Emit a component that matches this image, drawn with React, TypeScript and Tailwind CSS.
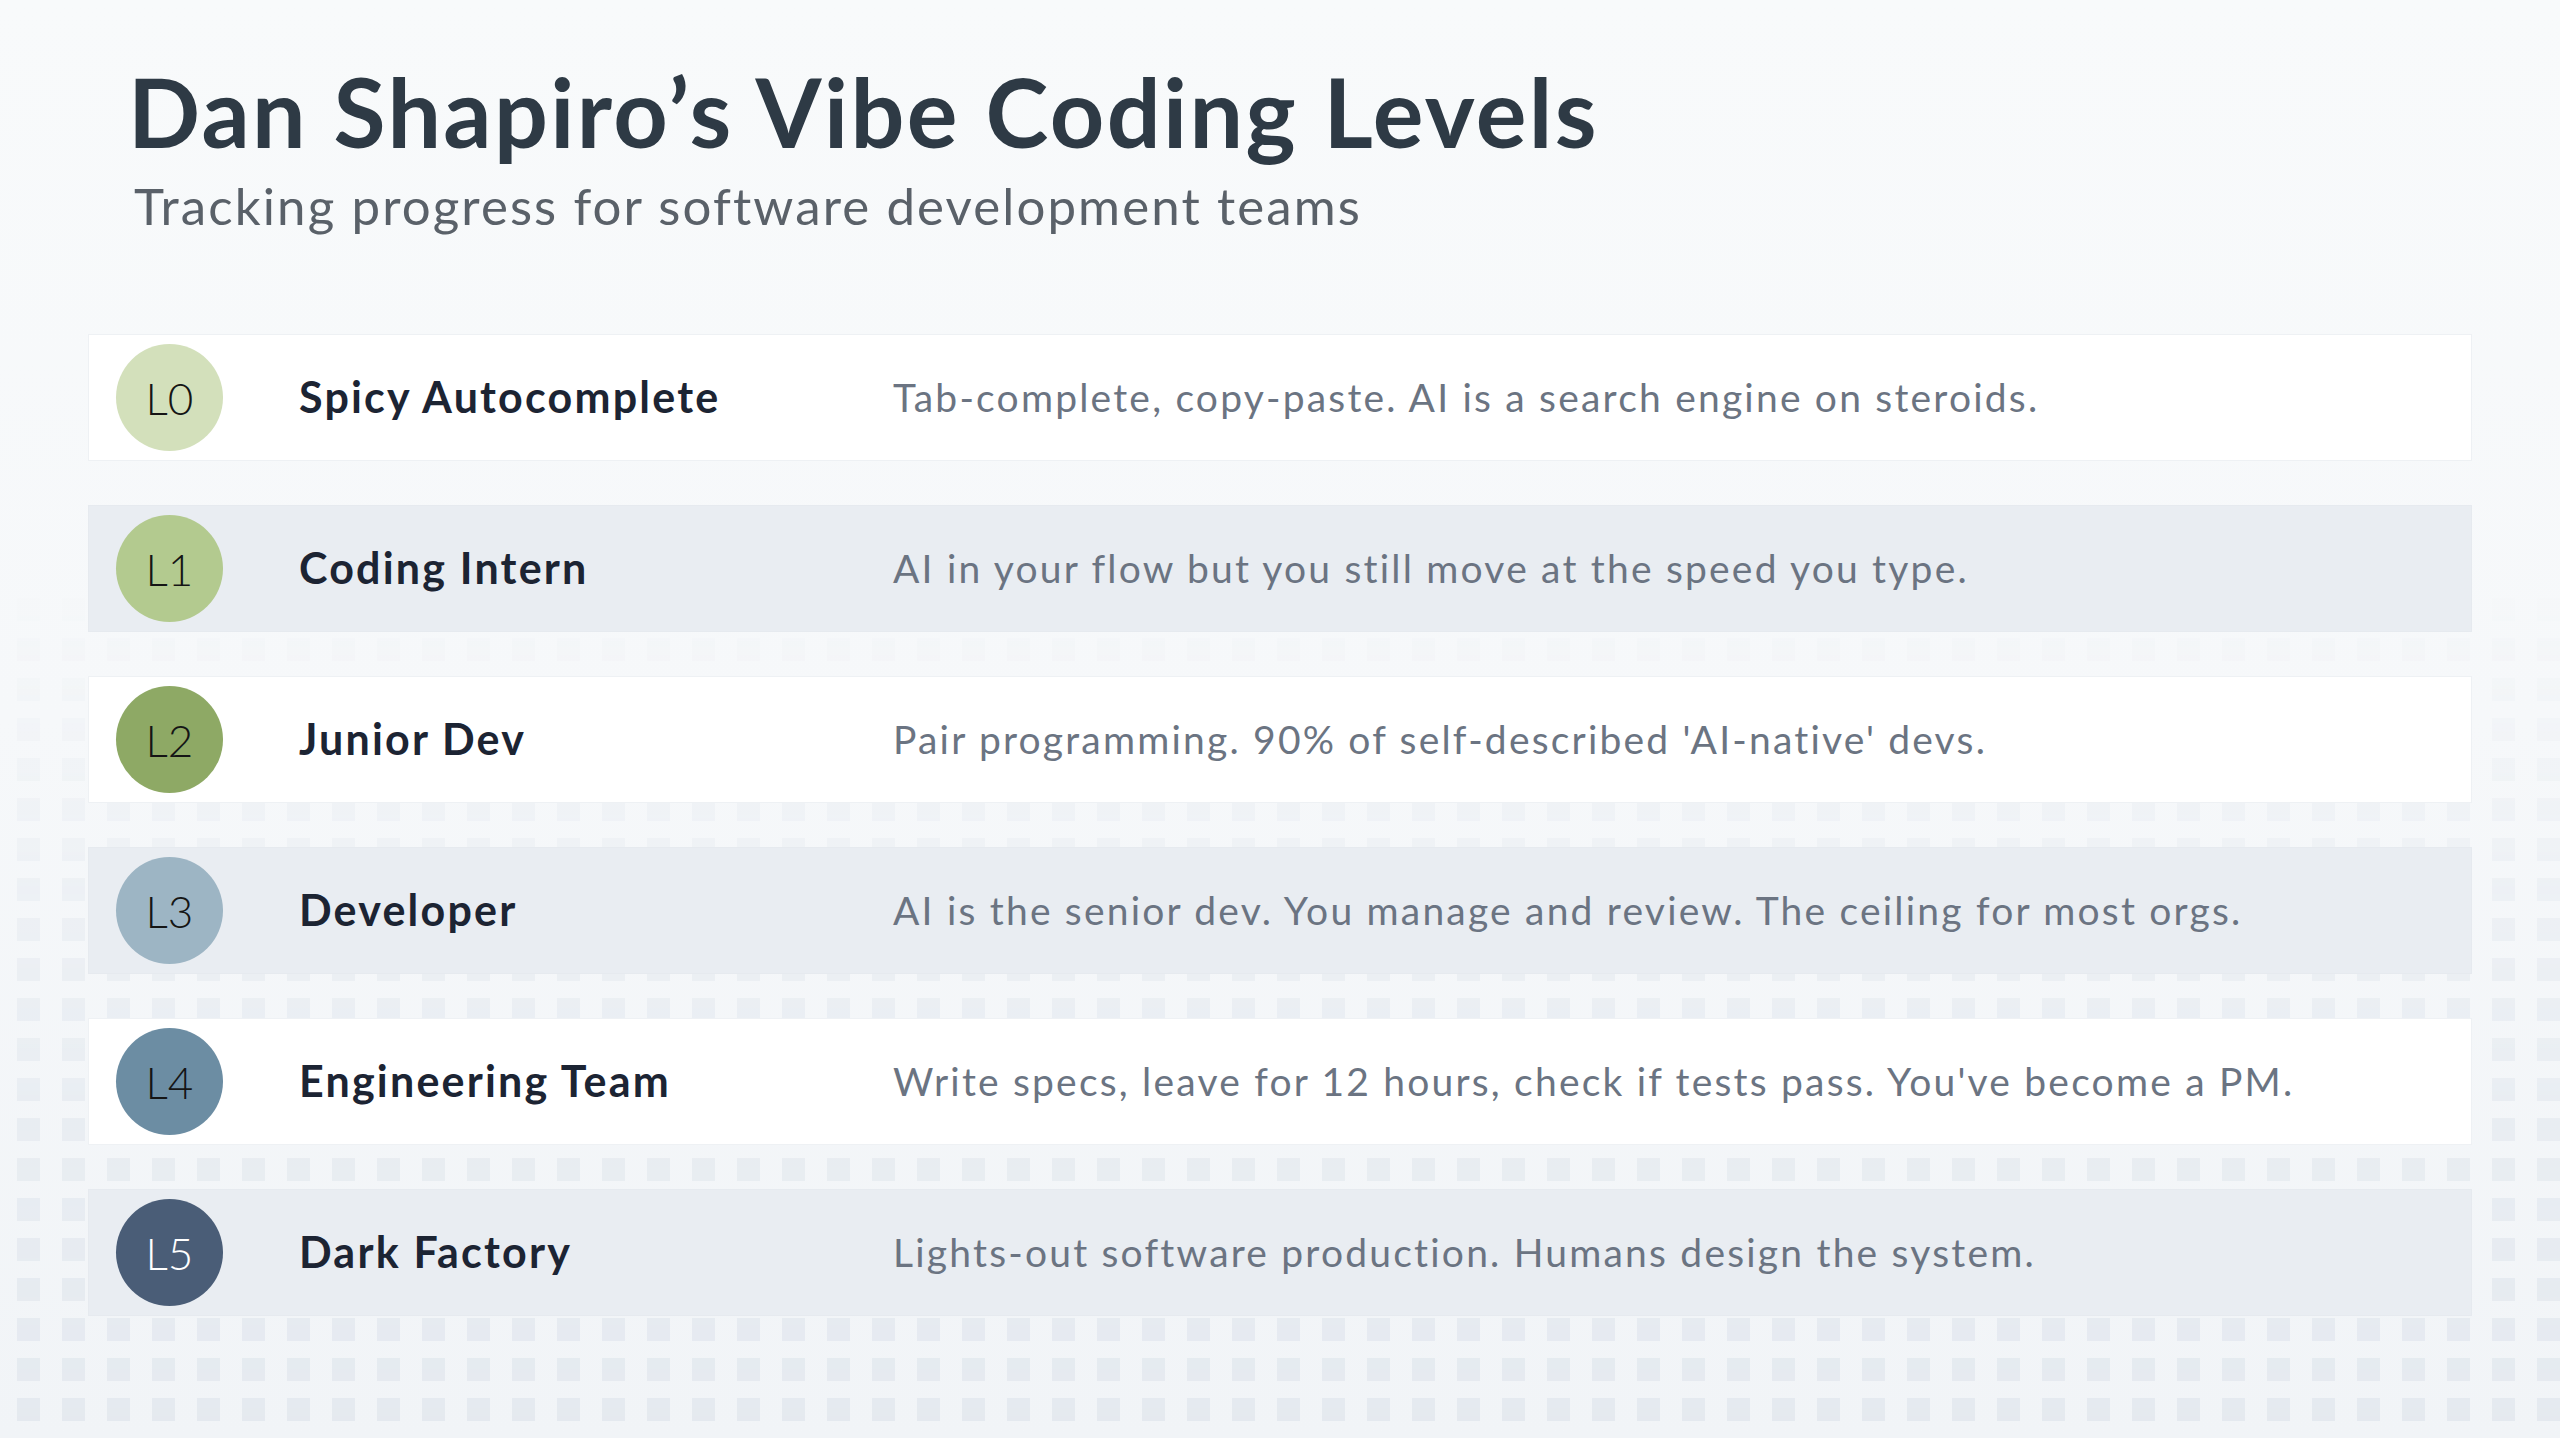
import React from "react";

const levels = [
  { l: "L0", c: "bg-[#d3e0bb]", t: "text-[#151515]", name: "Spicy Autocomplete", d: "Tab-complete, copy-paste. AI is a search engine on steroids.", alt: false },
  { l: "L1", c: "bg-[#b3ca8f]", t: "text-[#151515]", name: "Coding Intern", d: "AI in your flow but you still move at the speed you type.", alt: true },
  { l: "L2", c: "bg-[#8ea965]", t: "text-[#151515]", name: "Junior Dev", d: "Pair programming. 90% of self-described 'AI-native' devs.", alt: false },
  { l: "L3", c: "bg-[#9db5c4]", t: "text-[#151515]", name: "Developer", d: "AI is the senior dev. You manage and review. The ceiling for most orgs.", alt: true },
  { l: "L4", c: "bg-[#6c8da3]", t: "text-[#151515]", name: "Engineering Team", d: "Write specs, leave for 12 hours, check if tests pass. You've become a PM.", alt: false },
  { l: "L5", c: "bg-[#4a5d77]", t: "text-white", name: "Dark Factory", d: "Lights-out software production. Humans design the system.", alt: true },
];

export default function App() {
  return (
    <div
      className="relative w-[2560px] h-[1438px] overflow-hidden bg-[linear-gradient(180deg,#f8fafb_0%,#f6f8fa_50%,#f1f4f7_100%)]"
      style={{ fontFamily: "Lato, 'Open Sans', sans-serif" }}
    >
      <svg
        className="absolute inset-0 [mask-image:linear-gradient(180deg,transparent_40%,rgba(0,0,0,0.5)_65%,black_100%)]"
        width="2560"
        height="1438"
      >
        <defs>
          <pattern id="sq" x="17" y="38" width="45" height="40" patternUnits="userSpaceOnUse">
            <rect x="0" y="0" width="23" height="23" fill="#e4e9ef" />
          </pattern>
        </defs>
        <rect width="2560" height="1438" fill="url(#sq)" />
      </svg>

      <div className="relative flex flex-col">
        <div className="pl-[128px] pt-[56px]">
          <h1 className="text-[95px] leading-[110px] font-bold text-[#2e3a45] tracking-[2.4px]">
            Dan Shapiro’s Vibe Coding Levels
          </h1>
          <p className="pl-[6px] mt-[10px] text-[51px] leading-[60px] text-[#5a6169] tracking-[2.1px]">
            Tracking progress for software development teams
          </p>
        </div>

        <div className="mt-[98px] mx-[88px] flex flex-col gap-[44px]">
          {levels.map((r) => (
            <div
              key={r.l}
              className={`h-[127px] flex items-center pl-[27px] border ${
                r.alt ? "bg-[#e9edf2] border-[#e6eaef]" : "bg-white border-[#eef1f4]"
              }`}
            >
              <div
                className={`w-[107px] h-[107px] rounded-full flex items-center justify-center shrink-0 ${r.c} ${r.t} text-[44px] font-light`}
              >
                {r.l}
              </div>
              <div className="w-[670px] pl-[76px] text-[43px] font-bold text-[#1c2433] tracking-[2.2px] shrink-0">
                {r.name}
              </div>
              <div className="text-[39px] text-[#6b7482] tracking-[2.2px]">{r.d}</div>
            </div>
          ))}
        </div>
      </div>
    </div>
  );
}
